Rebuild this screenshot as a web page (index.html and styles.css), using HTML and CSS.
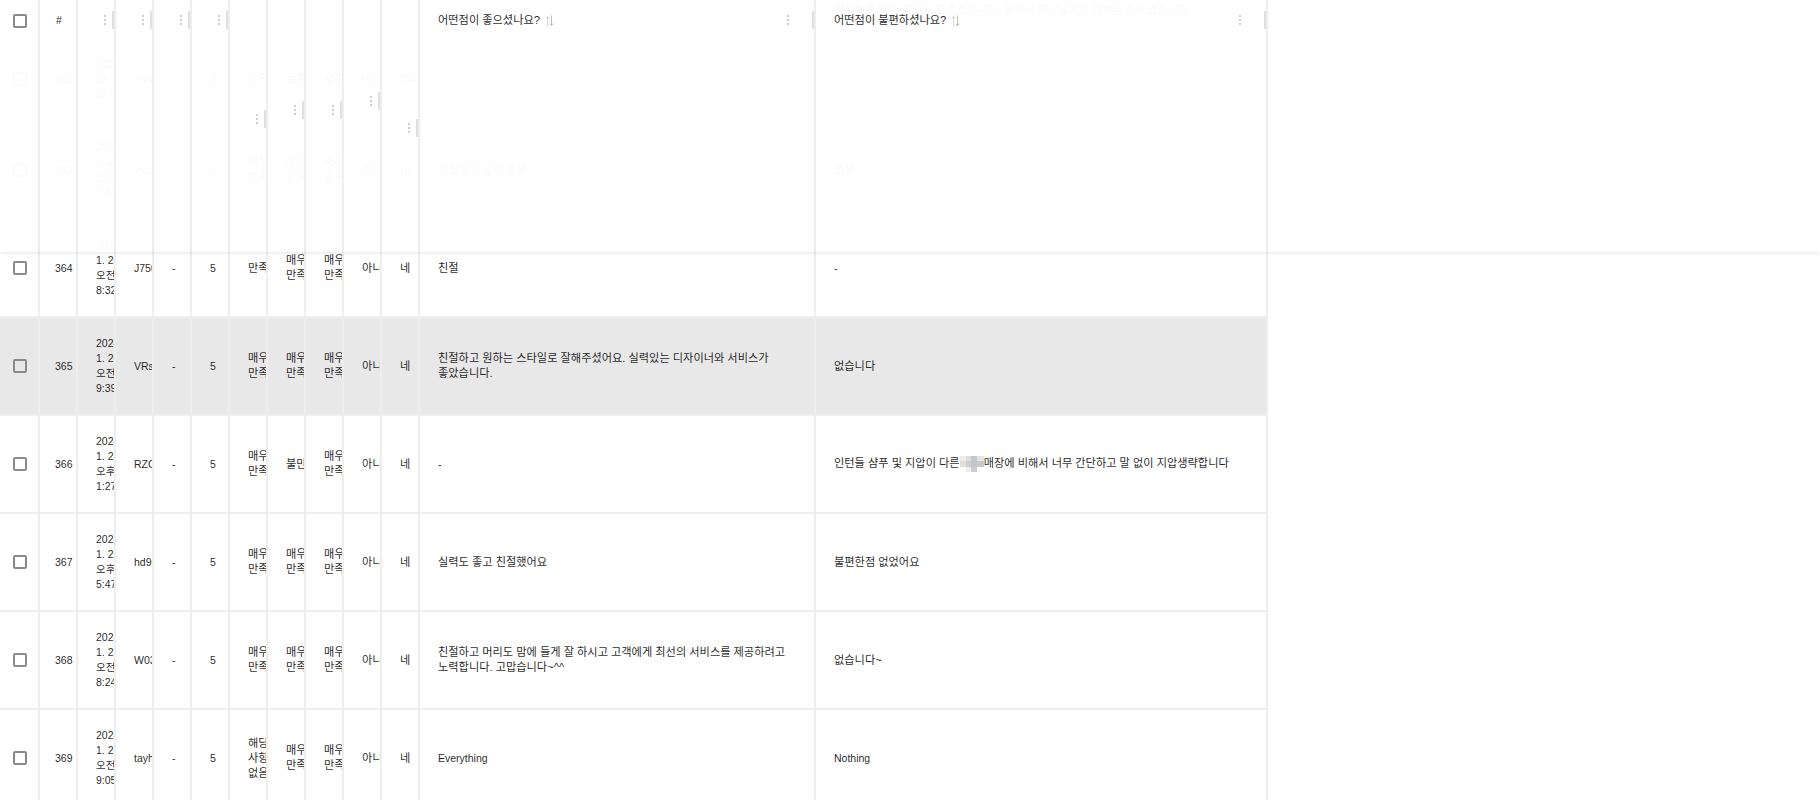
FILE: index.html
```html
<!DOCTYPE html>
<html lang="ko">
  <head>
    <meta charset="utf-8">
    <title>설문 응답</title>
    <link rel="stylesheet" href="styles.css">
  </head>

  <body>
    <svg class="defs" width="0" height="0">
      <symbol id="dots" viewBox="0 0 4 12">
        <circle cx="2" cy="2" r="1.2"></circle>
        <circle cx="2" cy="6" r="1.2"></circle>
        <circle cx="2" cy="10" r="1.2"></circle>
      </symbol>
      <symbol id="sort" viewBox="0 0 9 12">
        <path d="M2.5 11.5V1.5M.8 3.4l1.7-2 1.7 2" fill="none" stroke="#d4d4d4"></path>
        <path d="M6.5 .5v10M4.8 8.6l1.7 2 1.7-2" fill="none" stroke="#bdbdbd"></path>
      </symbol>
    </svg>

    <div class="data-grid">
      <div class="rows">
        <div class="row row-cut">
          <div class="cell cell-box"></div>
          <div class="cell cell-no"></div>
          <div class="cell"></div>
          <div class="cell"></div>
          <div class="cell"></div>
          <div class="cell"></div>
          <div class="cell"></div>
          <div class="cell"></div>
          <div class="cell"></div>
          <div class="cell"></div>
          <div class="cell"></div>
          <div class="cell"></div>
          <div class="cell ko cell-end"><span>시간 약속을 잡고 왔는데도 한참 기다렸고 담당 선생님 설명도 부족해서 아쉬웠습니다<br>맘지늦게 맞는 일인지 모르겠습니다. 실력이 뛰어날에도 재방문의사 없습니다.</span></div>
        </div>

        <div class="row row-short">
          <div class="cell cell-box"><span class="check"></span></div>
          <div class="cell cell-no">362</div>
          <div class="cell"><span class="date">2024.1. 25. 11:05:12</span></div>
          <div class="cell">yhN8</div>
          <div class="cell">-</div>
          <div class="cell">3</div>
          <div class="cell ko">만족</div>
          <div class="cell ko">보통</div>
          <div class="cell ko">보통</div>
          <div class="cell ko">아니요</div>
          <div class="cell ko">아니요</div>
          <div class="cell">-</div>
          <div class="cell">-</div>
        </div>

        <div class="row">
          <div class="cell cell-box"><span class="check"></span></div>
          <div class="cell cell-no">363</div>
          <div class="cell"><span class="date">2024. 1. 26. 오전 7:34:20</span></div>
          <div class="cell">TyZ2</div>
          <div class="cell">-</div>
          <div class="cell">5</div>
          <div class="cell ko">매우 만족</div>
          <div class="cell ko">매우 만족</div>
          <div class="cell ko">매우 만족</div>
          <div class="cell ko">아니요</div>
          <div class="cell ko">네</div>
          <div class="cell ko">친절하고 실력 좋음</div>
          <div class="cell ko">없음</div>
        </div>

        <div class="row">
          <div class="cell cell-box"><span class="check"></span></div>
          <div class="cell cell-no">364</div>
          <div class="cell"><span class="date">2024. 1. 26. 오전 8:32:11</span></div>
          <div class="cell">J750</div>
          <div class="cell">-</div>
          <div class="cell">5</div>
          <div class="cell ko">만족</div>
          <div class="cell ko">매우 만족</div>
          <div class="cell ko">매우 만족</div>
          <div class="cell ko">아니요</div>
          <div class="cell ko">네</div>
          <div class="cell ko">친절</div>
          <div class="cell">-</div>
        </div>

        <div class="row row-hover">
          <div class="cell cell-box"><span class="check"></span></div>
          <div class="cell cell-no">365</div>
          <div class="cell"><span class="date">2024. 1. 26. 오전 9:39:02</span></div>
          <div class="cell">VRs4</div>
          <div class="cell">-</div>
          <div class="cell">5</div>
          <div class="cell ko">매우 만족</div>
          <div class="cell ko">매우 만족</div>
          <div class="cell ko">매우 만족</div>
          <div class="cell ko">아니요</div>
          <div class="cell ko">네</div>
          <div class="cell ko">친절하고 원하는 스타일로 잘해주셨어요. 실력있는 디자이너와 서비스가 좋았습니다.</div>
          <div class="cell ko">없습니다</div>
        </div>

        <div class="row">
          <div class="cell cell-box"><span class="check"></span></div>
          <div class="cell cell-no">366</div>
          <div class="cell"><span class="date">2024. 1. 26. 오후 1:27:40</span></div>
          <div class="cell">RZC7</div>
          <div class="cell">-</div>
          <div class="cell">5</div>
          <div class="cell ko">매우 만족</div>
          <div class="cell ko">불만</div>
          <div class="cell ko">매우 만족</div>
          <div class="cell ko">아니요</div>
          <div class="cell ko">네</div>
          <div class="cell">-</div>
          <div class="cell ko"><span>인턴들 샴푸 및 지압이 다른<span class="mosaic"></span>매장에 비해서 너무 간단하고 말 없이 지압생략합니다</span></div>
        </div>

        <div class="row">
          <div class="cell cell-box"><span class="check"></span></div>
          <div class="cell cell-no">367</div>
          <div class="cell"><span class="date">2024. 1. 26. 오후 5:47:33</span></div>
          <div class="cell">hd9k</div>
          <div class="cell">-</div>
          <div class="cell">5</div>
          <div class="cell ko">매우 만족</div>
          <div class="cell ko">매우 만족</div>
          <div class="cell ko">매우 만족</div>
          <div class="cell ko">아니요</div>
          <div class="cell ko">네</div>
          <div class="cell ko">실력도 좋고 친절했어요</div>
          <div class="cell ko">불편한점 없었어요</div>
        </div>

        <div class="row">
          <div class="cell cell-box"><span class="check"></span></div>
          <div class="cell cell-no">368</div>
          <div class="cell"><span class="date">2024. 1. 27. 오전 8:24:56</span></div>
          <div class="cell">W03x</div>
          <div class="cell">-</div>
          <div class="cell">5</div>
          <div class="cell ko">매우 만족</div>
          <div class="cell ko">매우 만족</div>
          <div class="cell ko">매우 만족</div>
          <div class="cell ko">아니요</div>
          <div class="cell ko">네</div>
          <div class="cell ko">친절하고 머리도 맘에 들게 잘 하시고 고객에게 최선의 서비스를 제공하려고 노력합니다. 고맙습니다~^^</div>
          <div class="cell ko">없습니다~</div>
        </div>

        <div class="row">
          <div class="cell cell-box"><span class="check"></span></div>
          <div class="cell cell-no">369</div>
          <div class="cell"><span class="date">2024. 1. 27. 오전 9:05:18</span></div>
          <div class="cell">tayh</div>
          <div class="cell">-</div>
          <div class="cell">5</div>
          <div class="cell ko">해당 사항 없음</div>
          <div class="cell ko">매우 만족</div>
          <div class="cell ko">매우 만족</div>
          <div class="cell ko">아니요</div>
          <div class="cell ko">네</div>
          <div class="cell">Everything</div>
          <div class="cell">Nothing</div>
        </div>
      </div>

      <div class="head">
        <div class="head-cell head-box"><span class="check"></span></div>
        <div class="head-cell head-no">#</div>
        <div class="head-cell"><span class="col-tools"><svg class="dots"><use href="#dots"></use></svg><i class="bar"></i></span></div>
        <div class="head-cell"><span class="col-tools"><svg class="dots"><use href="#dots"></use></svg><i class="bar"></i></span></div>
        <div class="head-cell"><span class="col-tools"><svg class="dots"><use href="#dots"></use></svg><i class="bar"></i></span></div>
        <div class="head-cell"><span class="col-tools"><svg class="dots"><use href="#dots"></use></svg><i class="bar"></i></span></div>
        <div class="head-cell"><span class="col-tools tools-119"><svg class="dots"><use href="#dots"></use></svg><i class="bar"></i></span></div>
        <div class="head-cell"><span class="col-tools tools-110"><svg class="dots"><use href="#dots"></use></svg><i class="bar"></i></span></div>
        <div class="head-cell"><span class="col-tools tools-110"><svg class="dots"><use href="#dots"></use></svg><i class="bar"></i></span></div>
        <div class="head-cell"><span class="col-tools tools-101"><svg class="dots"><use href="#dots"></use></svg><i class="bar"></i></span></div>
        <div class="head-cell"><span class="col-tools tools-128"><svg class="dots"><use href="#dots"></use></svg><i class="bar"></i></span></div>
        <div class="head-cell head-text">
          <span class="head-title">어떤점이 좋으셨나요?</span>
          <svg class="sort"><use href="#sort"></use></svg>
          <span class="col-tools tools-wide"><svg class="dots"><use href="#dots"></use></svg><i class="bar"></i></span>
        </div>
        <div class="head-cell head-text">
          <span class="head-title">어떤점이 불편하셨나요?</span>
          <svg class="sort"><use href="#sort"></use></svg>
          <span class="col-tools tools-wide"><svg class="dots"><use href="#dots"></use></svg><i class="bar"></i></span>
        </div>
      </div>
    </div>
  </body>
</html>
```

FILE: styles.css
```css
html,
body {
  height: 800px;
  margin: 0;
  overflow: hidden;
  background: #fff;
}

body {
  font-family: "Liberation Sans", "Noto Sans CJK KR", sans-serif;
  font-size: 10.5px;
  line-height: 15px;
  color: rgba(0, 0, 0, 0.87);
}

.defs {
  display: block;
  height: 0;
}

.data-grid {
  position: relative;
}

.row,
.head {
  display: grid;
  grid-template-columns: 40px repeat(10, 38px) 396px 452px;
  width: 1268px;
}

.row {
  box-sizing: border-box;
  height: 98px;
  border-bottom: 2px solid #eee;
}

.row-cut {
  height: 38px;
  border-bottom: 0;
}

.row-short {
  height: 84px;
}

.row-hover {
  background: #e8e8e8;
}

.cell {
  display: flex;
  align-items: center;
  box-sizing: border-box;
  min-width: 0;
  padding-left: 18px;
  overflow: hidden;
  border-right: 2px solid #eee;
  word-break: keep-all;
}

.ko {
  font-size: 11.2px;
}

.cell-box,
.head-box {
  padding-left: 2px;
  justify-content: center;
}

.cell-no {
  padding-left: 15px;
}

.cell-end {
  align-items: flex-end;
  padding-bottom: 20px;
  padding-right: 10px;
  white-space: nowrap;
}

.date {
  flex: none;
  width: 30px;
}

.check {
  display: block;
  box-sizing: border-box;
  width: 14px;
  height: 14px;
  border: 2px solid #8a8a8a;
  border-radius: 2px;
}

.mosaic {
  display: inline-block;
  width: 24px;
  height: 16px;
  vertical-align: middle;
  background:
    linear-gradient(90deg, #f0ece8 0 6px, #e0dcda 6px 11px, #c6c8cf 11px 17px, #e4e4e4 17px 24px) 0 0 / 24px 5px no-repeat,
    linear-gradient(90deg, #e2dedb 0 6px, #cfcdcd 6px 11px, #c3c5cc 11px 17px, #c9c9c9 17px 24px) 0 5px / 24px 6px no-repeat,
    linear-gradient(90deg, #fff 0 6px, #f0ece8 6px 11px, #cbcdd2 11px 17px, #fff 17px 24px) 0 11px / 24px 5px no-repeat;
}

/* header sits over the rows, the rows show through very faintly */
.head {
  position: absolute;
  top: 0;
  left: 0;
  width: 100%;
  height: 252px;
  background: rgba(255, 255, 255, 0.97);
  box-shadow: 0 1px 4px rgba(0, 0, 0, 0.1);
}

.head-cell {
  position: relative;
  box-sizing: border-box;
  height: 252px;
  border-right: 2px solid #eee;
}

.head-box {
  display: flex;
  align-items: flex-start;
  padding-top: 14px;
}

.head-no {
  padding: 13px 0 0 16px;
}

.head-text {
  display: flex;
  align-items: flex-start;
  padding: 13px 0 0 18px;
}

.head-title {
  font-size: 11.2px;
}

.sort {
  flex: none;
  width: 9px;
  height: 12px;
  margin: 2px 0 0 5px;
}

.col-tools {
  position: absolute;
  top: 11px;
  right: 0;
  display: flex;
  align-items: center;
  gap: 5px;
  height: 18px;
}

.tools-101 {
  top: 92px;
}

.tools-110 {
  top: 101px;
}

.tools-119 {
  top: 110px;
}

.tools-128 {
  top: 119px;
}

.tools-wide {
  gap: 22px;
}

.dots {
  display: block;
  width: 4px;
  height: 12px;
  fill: #cfcfcf;
}

.bar {
  display: block;
  width: 2px;
  height: 18px;
  background: #e0e0e0;
}
```
